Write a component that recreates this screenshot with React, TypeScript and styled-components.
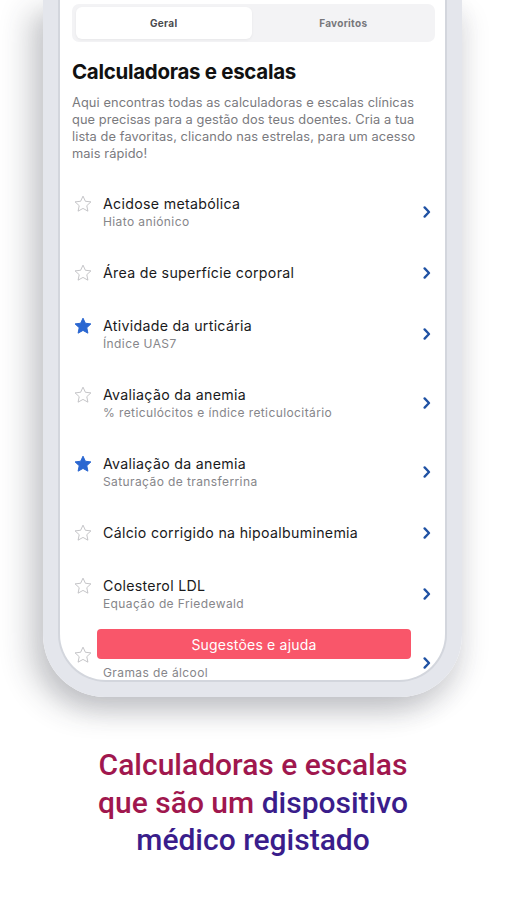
import styled, { createGlobalStyle } from "styled-components";

interface Calc {
  title: string;
  subtitle?: string;
  favorite?: boolean;
}

// the last row's title sits under the help button, so only its subtitle shows
const calcs: Calc[] = [
  { title: "Acidose metabólica", subtitle: "Hiato aniónico" },
  { title: "Área de superfície corporal" },
  { title: "Atividade da urticária", subtitle: "Índice UAS7", favorite: true },
  { title: "Avaliação da anemia", subtitle: "% reticulócitos e índice reticulocitário" },
  { title: "Avaliação da anemia", subtitle: "Saturação de transferrina", favorite: true },
  { title: "Cálcio corrigido na hipoalbuminemia" },
  { title: "Colesterol LDL", subtitle: "Equação de Friedewald" },
  { title: "", subtitle: "Gramas de álcool" },
];

const Star = ({ filled }: { filled?: boolean }) => (
  <StarIcon viewBox="0 0 24 24">
    <path
      d="M12 2.6l2.85 6.1 6.65.75-4.95 4.55 1.35 6.6L12 17.3l-5.9 3.3 1.35-6.6L2.5 9.45l6.65-.75z"
      fill={filled ? "#2b67d1" : "none"}
      stroke={filled ? "#2b67d1" : "#b9b9bd"}
      strokeWidth={filled ? 1.2 : 1}
      strokeLinejoin="round"
    />
  </StarIcon>
);

const Chevron = () => (
  <ChevronIcon viewBox="0 0 8 12">
    <path
      d="M1.6 1.4L6 6l-4.4 4.6"
      fill="none"
      stroke="#1f51a3"
      strokeWidth={2.3}
      strokeLinecap="round"
      strokeLinejoin="round"
    />
  </ChevronIcon>
);

const App = () => {
  return (
    <>
      <GlobalStyle />
      <Page>
        <Phone>
          <Screen>
            <Segmented>
              <Segment $active>Geral</Segment>
              <Segment>Favoritos</Segment>
            </Segmented>
            <Title>Calculadoras e escalas</Title>
            <Intro>
              Aqui encontras todas as calculadoras e escalas clínicas que
              precisas para a gestão dos teus doentes. Cria a tua lista de
              favoritas, clicando nas estrelas, para um acesso mais rápido!
            </Intro>
            <List>
              {calcs.map((c, i) => (
                <Row key={i}>
                  <Star filled={c.favorite} />
                  <RowText>
                    <RowTitle>{c.title}</RowTitle>
                    {c.subtitle && <RowSub>{c.subtitle}</RowSub>}
                  </RowText>
                  <Chevron />
                </Row>
              ))}
            </List>
            <HelpButton>Sugestões e ajuda</HelpButton>
          </Screen>
        </Phone>
        <Tagline>
          <Crimson>Calculadoras e escalas</Crimson>
          <br />
          <Crimson>que são um </Crimson>
          <Purple>dispositivo</Purple>
          <br />
          <Purple>médico registado</Purple>
        </Tagline>
      </Page>
    </>
  );
};

const GlobalStyle = createGlobalStyle`
  html, body {
    margin: 0;
    padding: 0;
    background: #ffffff;
  }
  body {
    font-family: Inter, "Liberation Sans", sans-serif;
  }
`;

const Page = styled.div`
  width: 506px;
  height: 900px;
  overflow: hidden;
  background: #ffffff;
`;

const Phone = styled.div`
  width: 385px;
  height: 680px;
  margin-left: 43px;
  border: 17px solid #e4e6ec;
  border-top: none;
  border-radius: 0 0 62px 62px;
  box-shadow: -14px 12px 30px rgba(40, 44, 60, 0.24),
    6px 14px 24px rgba(40, 44, 60, 0.1);
`;

const Screen = styled.div`
  position: relative;
  height: 100%;
  background: #ffffff;
  border-radius: 0 0 46px 46px;
  overflow: hidden;
  box-shadow: 0 0 0 2px #d3d6dd;
  padding: 4px 10px 0 12px;
  box-sizing: border-box;
`;

const Segmented = styled.div`
  display: grid;
  grid-template-columns: 1fr 1fr;
  gap: 4px;
  height: 38px;
  padding: 3px 4px;
  box-sizing: border-box;
  background: #f3f3f5;
  border-radius: 7px;
`;

const Segment = styled.div<{ $active?: boolean }>`
  display: flex;
  align-items: center;
  justify-content: center;
  border-radius: 6px;
  font-size: 10px;
  font-weight: 700;
  letter-spacing: 0.3px;
  color: ${({ $active }) => ($active ? "#4a4a4e" : "#77777b")};
  background: ${({ $active }) => ($active ? "#ffffff" : "transparent")};
  box-shadow: ${({ $active }) =>
    $active ? "0 1px 3px rgba(0, 0, 0, 0.05)" : "none"};
`;

const Title = styled.h1`
  margin: 17px 0 0;
  font-size: 20.5px;
  line-height: 26px;
  font-weight: 700;
  letter-spacing: -0.3px;
  color: #111111;
`;

const Intro = styled.p`
  margin: 9px 0 0;
  width: 348px;
  font-size: 12.8px;
  line-height: 17px;
  letter-spacing: 0.1px;
  color: #7a7a7e;
`;

const List = styled.div`
  margin-top: 15px;
  display: flex;
  flex-direction: column;
`;

const Row = styled.div`
  display: flex;
  align-items: center;
  padding: 16px 4px 16px 1px;
`;

const StarIcon = styled.svg`
  width: 20px;
  height: 20px;
  flex-shrink: 0;
  align-self: flex-start;
  margin: 0.5px 10px 0 0;
`;

const RowText = styled.div`
  flex: 1;
  display: flex;
  flex-direction: column;
`;

const RowTitle = styled.span`
  min-height: 21px;
  font-size: 14.2px;
  line-height: 21px;
  letter-spacing: 0.3px;
  color: #1a1a1c;
`;

const RowSub = styled.span`
  font-size: 12px;
  line-height: 16px;
  letter-spacing: 0.4px;
  color: #86868a;
`;

const ChevronIcon = styled.svg`
  width: 8px;
  height: 12px;
  flex-shrink: 0;
`;

const HelpButton = styled.div`
  position: absolute;
  left: 37px;
  right: 34px;
  bottom: 21px;
  height: 30px;
  display: flex;
  align-items: center;
  justify-content: center;
  background: #f9566a;
  border-radius: 4px;
  color: #ffffff;
  font-size: 14px;
  letter-spacing: 0.2px;
`;

const Tagline = styled.div`
  margin-top: 49px;
  text-align: center;
  font-family: Roboto, "Liberation Sans", sans-serif;
  font-size: 30px;
  line-height: 37.5px;
  font-weight: 500;
`;

const Crimson = styled.span`
  color: #a0174e;
`;

const Purple = styled.span`
  color: #3a1d8b;
`;

export default App;
